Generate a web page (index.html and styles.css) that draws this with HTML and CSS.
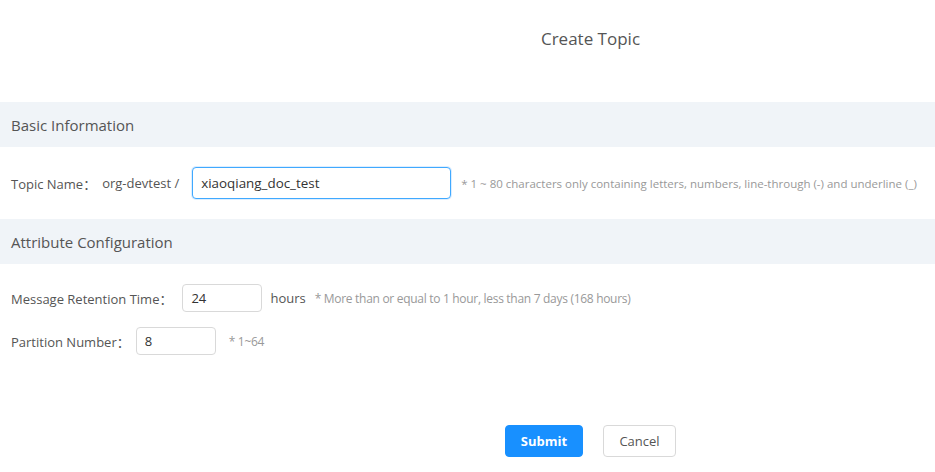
FILE: index.html
```html
<!DOCTYPE html>
<html>
<head>
<meta charset="utf-8">
<link rel="stylesheet" href="styles.css">
</head>
<body>
<div class="page">
  <h1 class="title">Create Topic</h1>
  <div class="band">Basic Information</div>
  <div class="row row-topic">
    <span class="label">Topic Name：</span>
    <span class="prefix">org-devtest /</span>
    <input class="input input-topic" value="xiaoqiang_doc_test">
    <span class="hint hint-wide">* 1 ~ 80 characters only containing letters, numbers, line-through (-) and underline (_)</span>
  </div>
  <div class="band">Attribute Configuration</div>
  <div class="attrs">
    <div class="row">
      <span class="label label-long">Message Retention Time：</span>
      <input class="input input-small" value="24">
      <span class="unit">hours</span>
      <span class="hint hint-narrow">* More than or equal to 1 hour, less than 7 days (168 hours)</span>
    </div>
    <div class="row">
      <span class="label">Partition Number：</span>
      <input class="input input-small" value="8">
      <span class="hint hint-narrow hint-part">* 1~64</span>
    </div>
  </div>
  <div class="actions">
    <button class="btn btn-primary">Submit</button>
    <button class="btn btn-default">Cancel</button>
  </div>
</div>
</body>
</html>
```
FILE: styles.css
```css
html, body {
  margin: 0;
  padding: 0;
  background: #fff;
  overflow: hidden;
}
.page {
  width: 1181px;
  font-family: "Open Sans", "Noto Sans CJK SC", sans-serif;
  color: #555;
  font-size: 13px;
}
.title {
  margin: 0;
  padding-top: 28px;
  height: 74px;
  line-height: 22px;
  font-size: 17px;
  font-weight: 400;
  text-align: center;
  color: #555;
}
.band {
  height: 45px;
  line-height: 46px;
  background: #f0f4f8;
  padding-left: 11px;
  font-size: 15px;
  color: #555;
}
.row {
  display: flex;
  align-items: center;
  padding-left: 11px;
}
.row-topic {
  height: 72px;
}
.label {
  color: #555;
  margin-right: 6px;
}
.label-long {
  margin-right: 10px;
}
.prefix {
  margin-right: 13px;
}
.input {
  box-sizing: border-box;
  font-family: inherit;
  font-size: 13px;
  color: #333;
  border: 1px solid #d9d9d9;
  border-radius: 4px;
  padding: 0 8px;
  outline: none;
  background: #fff;
}
.input-topic {
  width: 259px;
  height: 32px;
  border-color: #40a9ff;
  box-shadow: 0 0 0 1px rgba(24, 144, 255, 0.15);
  font-size: 13.4px;
}
.input-small {
  width: 80px;
  height: 28px;
}
.hint {
  color: #999;
}
.hint-wide {
  margin-left: 10px;
  font-size: 11.5px;
}
.hint-narrow {
  font-size: 12px;
  letter-spacing: -0.3px;
}
.hint-part {
  margin-left: 13px;
}
.unit {
  margin-left: 8px;
  margin-right: 9px;
}
.attrs {
  padding-top: 20px;
  display: flex;
  flex-direction: column;
  gap: 15px;
}
.actions {
  display: flex;
  justify-content: center;
  gap: 20px;
  margin-top: 70px;
}
.btn {
  box-sizing: border-box;
  height: 32px;
  border-radius: 4px;
  font-family: inherit;
  font-size: 13px;
  padding: 0;
}
.btn-primary {
  width: 78px;
  background: #1890ff;
  border: 1px solid #1890ff;
  color: #fff;
  font-weight: 700;
}
.btn-default {
  width: 73px;
  background: #fff;
  border: 1px solid #d9d9d9;
  color: #555;
}
```
